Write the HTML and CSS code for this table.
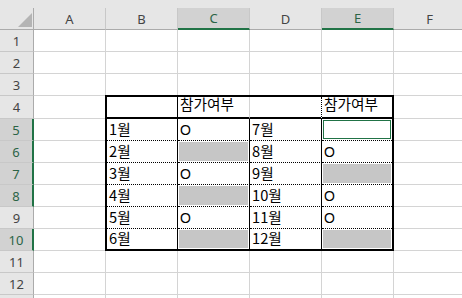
FILE: index.html
```html
<!DOCTYPE html>
<html lang="ko">
<head>
    <meta charset="UTF-8">
    <title>참가여부</title>
    <link rel="stylesheet" href="styles.css">
</head>
<body>
    <div class="sheet">
        <div class="strip"></div>

        <!-- column headers -->
        <div class="corner">
            <svg width="14" height="14" viewBox="0 0 14 14"><polygon points="14,0 14,14 0,14" fill="#b4b4b4"/></svg>
        </div>
        <div class="col-head">A</div>
        <div class="col-head">B</div>
        <div class="col-head sel">C</div>
        <div class="col-head">D</div>
        <div class="col-head sel">E</div>
        <div class="col-head">F</div>

        <div class="row-head">1</div>
        <div class="cell"></div><div class="cell"></div><div class="cell"></div>
        <div class="cell"></div><div class="cell"></div><div class="cell"></div>

        <div class="row-head">2</div>
        <div class="cell"></div><div class="cell"></div><div class="cell"></div>
        <div class="cell"></div><div class="cell"></div><div class="cell"></div>

        <div class="row-head">3</div>
        <div class="cell"></div><div class="cell"></div><div class="cell"></div>
        <div class="cell"></div><div class="cell"></div><div class="cell"></div>

        <div class="row-head">4</div>
        <div class="cell"></div>

        <!-- B4:E10 -->
        <div class="table">
            <div class="t"></div>
            <div class="t">참가여부</div>
            <div class="t"></div>
            <div class="t">참가여부</div>

            <div class="t">1월</div>
            <div class="t mark">O</div>
            <div class="t">7월</div>
            <div class="t active"></div>

            <div class="t">2월</div>
            <div class="t picked"></div>
            <div class="t">8월</div>
            <div class="t mark">O</div>

            <div class="t">3월</div>
            <div class="t mark">O</div>
            <div class="t">9월</div>
            <div class="t picked"></div>

            <div class="t">4월</div>
            <div class="t picked"></div>
            <div class="t">10월</div>
            <div class="t mark">O</div>

            <div class="t">5월</div>
            <div class="t mark">O</div>
            <div class="t">11월</div>
            <div class="t mark">O</div>

            <div class="t">6월</div>
            <div class="t picked"></div>
            <div class="t">12월</div>
            <div class="t picked"></div>
        </div>

        <div class="cell"></div>

        <div class="row-head sel">5</div><div class="cell"></div><div class="cell"></div>
        <div class="row-head sel">6</div><div class="cell"></div><div class="cell"></div>
        <div class="row-head sel">7</div><div class="cell"></div><div class="cell"></div>
        <div class="row-head sel">8</div><div class="cell"></div><div class="cell"></div>
        <div class="row-head">9</div><div class="cell"></div><div class="cell"></div>
        <div class="row-head sel">10</div><div class="cell"></div><div class="cell"></div>

        <div class="row-head">11</div>
        <div class="cell"></div><div class="cell"></div><div class="cell"></div>
        <div class="cell"></div><div class="cell"></div><div class="cell"></div>

        <div class="row-head">12</div>
        <div class="cell"></div><div class="cell"></div><div class="cell"></div>
        <div class="cell"></div><div class="cell"></div><div class="cell"></div>

        <!-- row 13 only peeks in at the bottom edge -->
        <div class="row-head"></div>
        <div class="cell"></div><div class="cell"></div><div class="cell"></div>
        <div class="cell"></div><div class="cell"></div><div class="cell"></div>
    </div>
</body>
</html>
```

FILE: styles.css
```css
body {
    margin: 0;
    overflow: hidden;
    background-color: #fff;
    font-family: "Noto Sans CJK KR", sans-serif;
}
.sheet {
    display: grid;
    grid-template-columns: 34px repeat(6, 72px);
    grid-template-rows: 8px 22px 22px 22px 22px 23px repeat(9, 22px);
    height: 298px;
    overflow: hidden;
}
.strip {
    grid-column: 1 / -1;
    background-color: #e6e6e6;
}
.corner {
    display: flex;
    justify-content: flex-end;
    align-items: flex-end;
    padding: 0 1px 2px 0;
    background-color: #e6e6e6;
    border-right: 1px solid #ababab;
    border-bottom: 1px solid #ababab;
}
.corner svg {
    display: block;
}
.col-head, .row-head {
    display: flex;
    align-items: center;
    justify-content: center;
    background-color: #e6e6e6;
    color: #444;
    font-family: "Noto Sans", "Open Sans", sans-serif;
    font-size: 13px;
}
.col-head {
    border-right: 1px solid #c8c8c8;
    border-bottom: 1px solid #ababab;
}
.col-head.sel {
    background-color: #d2d2d2;
    border-bottom: 2px solid #217346;
    color: #2b6446;
}
.row-head {
    border-right: 1px solid #ababab;
    border-bottom: 1px solid #c8c8c8;
}
.row-head.sel {
    background-color: #d2d2d2;
    border-right: 2px solid #217346;
    color: #2b6446;
}
.cell {
    border-right: 1px solid #d4d4d4;
    border-bottom: 1px solid #d4d4d4;
}

/* bordered block B4:E10 */
.table {
    grid-column: 3 / 7;
    grid-row: 6 / 13;
    margin: -1px 0 0 -1px;
    position: relative;
    z-index: 1;
    display: grid;
    grid-template-columns: 71px 72px 72px 70px;
    grid-template-rows: repeat(6, 22px) 20px;
    border: 2px solid #000;
    background-color: #fff;
}
.t {
    display: flex;
    align-items: flex-end;
    padding: 0 0 3px 2px;
    border-right: 1px solid #000;
    border-bottom: 1px dotted #000;
    color: #000;
    font-size: 14.67px;
    line-height: 16px;
    white-space: nowrap;
}
.t:nth-child(4n) {
    border-right: none;
}
.t:nth-child(-n+4) {
    padding-bottom: 5px;
    border-bottom: 2px solid #000;
}
.t:nth-child(2) {
    border-right-color: #d4d4d4;
}
.t:nth-child(3) {
    border-right-style: dotted;
}
.t:nth-child(n+25) {
    border-bottom: none;
}
.t.mark {
    padding: 0 0 3px 2px;
    font-family: "Liberation Sans", sans-serif;
    font-size: 14px;
    line-height: 14px;
}
.t.picked {
    padding: 1px;
    background-color: #c6c6c6;
    background-clip: content-box;
}
.t.active {
    box-shadow: inset 0 0 0 1px #fff, inset 0 0 0 2px #217346;
}
```
